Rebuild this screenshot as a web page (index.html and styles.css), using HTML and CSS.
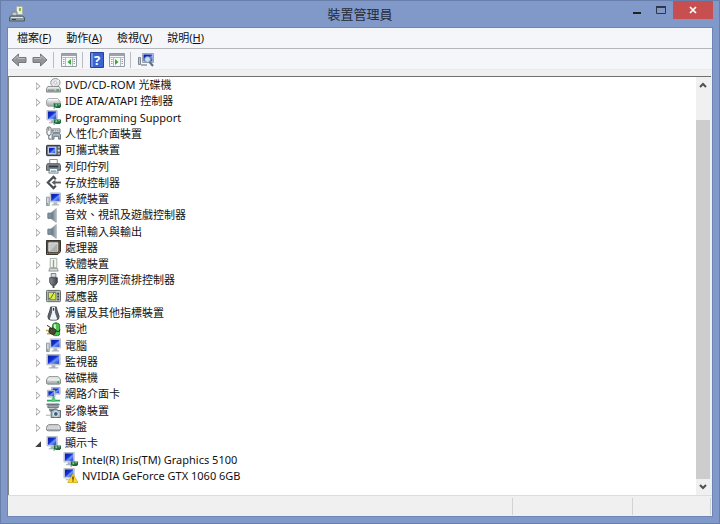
FILE: index.html
```
<!DOCTYPE html>
<html lang="zh-Hant">
<head>
<meta charset="utf-8">
<meta name="viewport" content="width=device-width, initial-scale=1">
<title>裝置管理員</title>
<link rel="stylesheet" href="styles.css">
</head>
<body>

<svg class="sprites" aria-hidden="true">
  <defs>
    <linearGradient id="screen" x1="0" y1="0" x2="1" y2="1"><stop offset="0" stop-color="#0a18a0"/><stop offset=".45" stop-color="#1230d8"/><stop offset=".6" stop-color="#6f95f5"/><stop offset="1" stop-color="#1b36c8"/></linearGradient>
    <linearGradient id="metal" x1="0" y1="0" x2="0" y2="1"><stop offset="0" stop-color="#f8f8f8"/><stop offset="1" stop-color="#a0a4a6"/></linearGradient>
    <linearGradient id="dark" x1="0" y1="0" x2="1" y2="0"><stop offset="0" stop-color="#8a9096"/><stop offset="1" stop-color="#3c4248"/></linearGradient>
    <linearGradient id="cone" x1="0" y1="0" x2="1" y2="0"><stop offset="0" stop-color="#5c6c78"/><stop offset="1" stop-color="#b4c0c9"/></linearGradient>
  </defs>
  <symbol id="card" viewBox="0 0 8 7"><path d="M0 0h1v1h7v4H7v1H2V5H1v2H0z" fill="#1c6b3c"/><path d="M2 2h2v2H2zM5 2h2v1H5z" fill="#8fc9a0"/></symbol>
  <symbol id="monitor" viewBox="0 0 16 16"><path d="M1 .5h14v11H1z" fill="#dfe4ea" stroke="#aab2bc"/><path d="M2 1.500h12v9H2z" fill="url(#screen)"/><path d="M6 12h4v2h3v1.500H3V14h3z" fill="#a9afb4"/></symbol>
  <symbol id="display" viewBox="0 0 16 16"><path d="M1 .5h11v10H1z" fill="#dfe4ea" stroke="#b4bcc6"/><path d="M2 1.500h9v8H2z" fill="url(#screen)"/><path d="M5 11h3v2h1v1H3v-1h2z" fill="#a9afb4"/><use href="#card" x="8" y="9" width="8" height="7"/></symbol>
  <symbol id="display-warn" viewBox="0 0 16 16"><path d="M1 .5h11v10H1z" fill="#dfe4ea" stroke="#b4bcc6"/><path d="M2 1.500h9v8H2z" fill="url(#screen)"/><path d="M3 12h3v1H3z" fill="#a9afb4"/><path d="M10.500 6 16 15.500H5z" fill="#ffda28" stroke="#c79a00" stroke-width=".7"/><path d="M10 9h1.300v3.500H10zM10 13.300h1.300v1.200H10z" fill="#2c2400"/></symbol>
  <symbol id="disc" viewBox="0 0 16 16"><ellipse cx="10" cy="5" rx="5" ry="4.500" fill="#e3e6e8" stroke="#8c9194"/><path d="M10 5l4-3M10 5l-3 4" stroke="#fff"/><circle cx="10" cy="5" r="1.500" fill="#fff" stroke="#999" stroke-width=".6"/><path d="M2 9h12l1.500 2.500V15H.5v-3.500z" fill="url(#metal)" stroke="#84888a"/><path d="M2 13h7" stroke="#707476"/><path d="M11 12h3v2h-3z" fill="#49a860"/></symbol>
  <symbol id="ide" viewBox="0 0 16 16"><path d="M2.500 5h10L15 8v3.500L13 13H2L.5 11.500V7z" fill="url(#metal)" stroke="#969a9c"/><path d="M2 6h11" stroke="#fff"/><use href="#card" x="8" y="9" width="8" height="7"/></symbol>
  <symbol id="drive" viewBox="0 0 16 16"><path d="M3 6h10l2.500 3v4l-1 1H1.500l-1-1V9z" fill="url(#metal)" stroke="#85898b"/><path d="M2 9.500h12" stroke="#fff"/><path d="M12 11h2v2h-2z" fill="#38a83c"/></symbol>
  <symbol id="hid" viewBox="0 0 16 16"><rect x="1" y="1" width="4.500" height="9" rx="2.200" fill="#f4f5f5" stroke="#596069"/><path d="M3 2v3M3 10v4h3" fill="none" stroke="#596069"/><path d="M7 3h8v4H7z" fill="#cfd2d4" stroke="#888f94"/><path d="M7.500 5h8" stroke="#70777d" stroke-dasharray="1 1"/><path d="M6.500 14V9l2-1.500h5L15.500 9v5h-2v-3h-5v3z" fill="#a7bac6" stroke="#606d78"/></symbol>
  <symbol id="portable" viewBox="0 0 16 16"><rect x=".5" y="2.500" width="15" height="11" rx="1" fill="#606873" stroke="#252c38"/><path d="M2.500 4.500h8v7h-8z" fill="url(#screen)" stroke="#eef"/><path d="M13 4.500h1.500M13 11.500h1.500" stroke="#fff"/><circle cx="13.600" cy="8" r="1.200" fill="#dce1e8"/></symbol>
  <symbol id="printer" viewBox="0 0 16 16"><path d="M4 .5h8V6H4z" fill="#fff" stroke="#83888b"/><path d="M1.500 5h13l1 2v5h-15V7z" fill="#838b90" stroke="#4f565a"/><path d="M3 7h10v2H3z" fill="#343a3f"/><path d="M4 10h8l1 5H3z" fill="#f5f9fc" stroke="#6f777c"/><path d="M5 12h6v2H5z" fill="#7fb2d9"/></symbol>
  <symbol id="storage" viewBox="0 0 16 16"><path d="M10.500 4.500 8 2 2 8l6 6 2.500-2.500" fill="none" stroke="#4b4f52" stroke-width="2.400"/><path d="M16 8H8" stroke="#585c5f" stroke-width="2"/><path d="M6 8l4-3v6z" fill="#585c5f"/></symbol>
  <symbol id="computer" viewBox="0 0 16 16"><path d="M.5 5.500h3v9h-3z" fill="#d3d8dc" stroke="#8e969e"/><path d="M1 12h1.500v1.500H1z" fill="#38b24b"/><path d="M4.500 1h11v9.500h-11z" fill="#dfe4ea" stroke="#b0b9c4"/><path d="M5.500 2h9v7.500h-9z" fill="url(#screen)"/><path d="M8 11h4v2h2v1.500H6V13h2z" fill="#b0b6ba"/></symbol>
  <symbol id="speaker" viewBox="0 0 16 16"><path d="M2 5.500h3.500v5.500H2z" fill="#8494a0" stroke="#647480"/><path d="M5.500 5 11 .5v15L5.500 11.500z" fill="url(#cone)" stroke="#8593a0" stroke-width=".6"/></symbol>
  <symbol id="cpu" viewBox="0 0 16 16"><path d="M.5.500h15v12l-3 3H.5z" fill="#5a4e38" stroke="#2c2a26"/><path d="M1 14.500h12L15 12" fill="none" stroke="#c09a50" stroke-dasharray="1 1"/><path d="M3 3h9.500v9H3z" fill="#c4c8ca" stroke="#e0e2e4"/><path d="M4 12 12 4v8z" fill="#a8adb0"/></symbol>
  <symbol id="software" viewBox="0 0 16 16"><path d="M4.500 1.500h7v10h-7z" fill="#f4f7f4" stroke="#a4aba6"/><path d="M8 3v9" stroke="#7cb47c" stroke-width="1.500"/><path d="M4 12h8l1 3H3z" fill="#d4d8d6" stroke="#8f9692"/></symbol>
  <symbol id="usb" viewBox="0 0 16 16"><path d="M5.500.5h5v4h-5z" fill="#d7dadc" stroke="#777c80"/><path d="M4 5h8v5l-2 3H6L4 10z" fill="url(#dark)" stroke="#42484d"/><path d="M8 13v3" stroke="#444b50" stroke-width="2"/></symbol>
  <symbol id="sensor" viewBox="0 0 16 16"><rect x=".5" y="1.500" width="15" height="12" rx="1" fill="#b8bfbd" stroke="#5d6562"/><path d="M2.500 3.500h8v8h-8z" fill="#e6ea3c" stroke="#6b716d"/><path d="M3 10h2l4-7" fill="none" stroke="#2f7741"/><path d="M12 4h2v2h-2zM12 7h2v2h-2zM12 10h2v2h-2z" fill="#3d4642"/></symbol>
  <symbol id="mouse" viewBox="0 0 16 16"><path d="M5 1h6l1 4 2 6q0 4-3 4H5q-3 0-3-4l2-6z" fill="#59636e" stroke="#424a53"/><path d="M6.500 1h3v6l2.500 7q-4 1.500-8 0L6.500 7z" fill="#f2f5f7"/><path d="M8 2v3" stroke="#2f3c49" stroke-width="1.500"/></symbol>
  <symbol id="battery" viewBox="0 0 16 16"><path d="M9 0h3v2H9z" fill="#9aa59d"/><rect x="7" y="1.500" width="7.500" height="13" rx="2" fill="#4cc44c" stroke="#207b28"/><path d="M9.500 2.500v5" stroke="#d5f7cc" stroke-width="2"/><path d="M0 9h4M1 12.500h4" stroke="#c8a548" stroke-width="1.500"/><path d="M4 6.500h4l3 2.500-2 4H6l-3-2z" fill="#4d4937" stroke="#24251e"/><path d="M11 10q4 1 4-2M1 3.500l4 2.500" fill="none" stroke="#24251e"/></symbol>
  <symbol id="network" viewBox="0 0 16 16"><path d="M6 .5h9v7H6z" fill="#dfe4ea" stroke="#9aaac0"/><path d="M7 1.500h7v5H7z" fill="url(#screen)"/><path d="M1.500 3.500h8v7h-8z" fill="#dfe4ea" stroke="#9aaac0"/><path d="M2.500 4.500h6v5h-6z" fill="url(#screen)"/><path d="M8 10v4M1 14.500h14" stroke="#25ad5b" stroke-width="2"/><path d="M6 12h4v4H6z" fill="#54ce7d"/></symbol>
  <symbol id="imaging" viewBox="0 0 16 16"><path d="M1 .5h13l1 2H0z" fill="#69777e"/><path d="M2 3h11v2H2z" fill="#b7c1c5" stroke="#5f696e"/><path d="M3 6h8L8 9H4z" fill="#707e86"/><path d="M5.500 8h2l1-1.500h3l1 1.500h3v7.500h-10z" fill="#aeb9c0" stroke="#57646d"/><circle cx="10.500" cy="11.700" r="2.600" fill="#326488" stroke="#f4f8fb"/><path d="M0 13h5" stroke="#a0a8ac"/></symbol>
  <symbol id="keyboard" viewBox="0 0 16 16"><path d="M3 5h10q2.500 1 2.500 4v1.500q-.5 1-2 1h-11q-1.500 0-2-1V9Q.5 6 3 5z" fill="#e4e7e9" stroke="#6e757b"/><path d="M3 6.500h10M2 8.500h12" stroke="#989fa5" stroke-dasharray="1 1"/><path d="M1 10.500h14" stroke="#858c92"/></symbol>
  <symbol id="app" viewBox="0 0 16 16"><path d="M7.500.5h6v8h-6z" fill="#e9eee8" stroke="#a7b0aa"/><path d="M10 2h2v3h-2z" fill="#84b83d"/><path d="M3 6h5v4H3z" fill="#c2cbd1" stroke="#77838c"/><path d="M1.500 10h12l2 1.500v3.500H.5v-3.500z" fill="#8a98a0" stroke="#4e5c66"/><path d="M2 11.500h12" stroke="#dbe3e7"/><path d="M3 13.500h4" stroke="#38454e"/></symbol>
  <symbol id="arrow" viewBox="0 0 16 14"><path d="M1 7 7.500 1v3.500H15v5H7.500V13z" fill="#929495" stroke="#76787a"/><path d="M3 6.500 7 3v2.500h7" fill="none" stroke="#b9bbbc"/></symbol>
  <symbol id="pane" viewBox="0 0 16 14"><path d="M.5.500h15v13H.5z" fill="#f7f9fa" stroke="#929aa2"/><path d="M1 2h14" stroke="#9aa5b0" stroke-width="2"/><path d="M1 4.500h14M4.500 5v8M11.500 5v8" stroke="#b4bcc3"/><path d="M2 6.500h1.500M2 8.500h1.500M2 10.500h1.500M12.500 6.500H14M12.500 8.500H14M12.500 10.500H14" stroke="#7aa6cb"/></symbol>
  <symbol id="help" viewBox="0 0 14 16"><path d="M.5.500h13v15H.5z" fill="#3965d2" stroke="#274398"/><path d="M1 1h2v14H1z" fill="#7295e4"/></symbol>
  <symbol id="scan" viewBox="0 0 16 14"><path d="M.5 4.500h2v7h-2z" fill="#bfc7ce" stroke="#7b8791"/><path d="M4.500.5h11v9h-11z" fill="#dce2ea" stroke="#9ca7b3"/><path d="M5.500 1.500h9v7h-9z" fill="url(#screen)"/><path d="M3 12h6" stroke="#a5adb5" stroke-width="2"/><circle cx="9.500" cy="6.500" r="3" fill="#c7def5" stroke="#7388a1"/><path d="m11.500 9 3.500 4" stroke="#62717e" stroke-width="2"/></symbol>
</svg>

<div class="window">
  <header class="titlebar">
    <svg class="app-icon"><use href="#app"/></svg>
    <h1>裝置管理員</h1>
    <div class="controls">
      <button type="button" aria-label="最小化"><svg viewBox="0 0 14 12"><path d="M3 9h8" stroke="#222" stroke-width="2"/></svg></button>
      <button type="button" aria-label="最大化"><svg viewBox="0 0 14 12"><path d="M2.500 3.500h9v6h-9z" fill="none" stroke="#303747"/><path d="M2 3h10" stroke="#303747" stroke-width="2"/></svg></button>
      <button type="button" class="close" aria-label="關閉"><svg viewBox="0 0 14 12"><path d="m4 3 6 6m0-6L4 9" stroke="#fff" stroke-width="1.700"/></svg></button>
    </div>
  </header>

  <main class="client">
    <nav class="menu">
      <button type="button">檔案(<u>F</u>)</button>
      <button type="button">動作(<u>A</u>)</button>
      <button type="button">檢視(<u>V</u>)</button>
      <button type="button">說明(<u>H</u>)</button>
    </nav>

    <div class="toolbar">
      <button type="button" aria-label="上一頁"><svg><use href="#arrow"/></svg></button>
      <button type="button" aria-label="下一頁"><svg class="flip"><use href="#arrow"/></svg></button>
      <span class="sep"></span>
      <button type="button" aria-label="顯示主控台樹狀目錄"><svg viewBox="0 0 16 14"><use href="#pane"/><path d="M10 6v6L6.500 9z" fill="#3da935"/></svg></button>
      <span class="sep"></span>
      <button type="button" class="help" aria-label="說明"><svg><use href="#help"/></svg><b>?</b></button>
      <button type="button" aria-label="顯示動作窗格"><svg viewBox="0 0 16 14"><use href="#pane"/><path d="M6 6v6l3.500-3z" fill="#3da935"/></svg></button>
      <span class="sep"></span>
      <button type="button" aria-label="掃描硬體變更"><svg><use href="#scan"/></svg></button>
    </div>

    <div class="view">
      <ul class="tree">
        <li><button type="button" class="twisty" aria-label="展開"></button><svg><use href="#disc"/></svg>DVD/CD-ROM 光碟機</li>
        <li><button type="button" class="twisty" aria-label="展開"></button><svg><use href="#ide"/></svg>IDE ATA/ATAPI 控制器</li>
        <li><button type="button" class="twisty" aria-label="展開"></button><svg><use href="#display"/></svg>Programming Support</li>
        <li><button type="button" class="twisty" aria-label="展開"></button><svg><use href="#hid"/></svg>人性化介面裝置</li>
        <li><button type="button" class="twisty" aria-label="展開"></button><svg><use href="#portable"/></svg>可攜式裝置</li>
        <li><button type="button" class="twisty" aria-label="展開"></button><svg><use href="#printer"/></svg>列印佇列</li>
        <li><button type="button" class="twisty" aria-label="展開"></button><svg><use href="#storage"/></svg>存放控制器</li>
        <li><button type="button" class="twisty" aria-label="展開"></button><svg><use href="#computer"/></svg>系統裝置</li>
        <li><button type="button" class="twisty" aria-label="展開"></button><svg><use href="#speaker"/></svg>音效、視訊及遊戲控制器</li>
        <li><button type="button" class="twisty" aria-label="展開"></button><svg><use href="#speaker"/></svg>音訊輸入與輸出</li>
        <li><button type="button" class="twisty" aria-label="展開"></button><svg><use href="#cpu"/></svg>處理器</li>
        <li><button type="button" class="twisty" aria-label="展開"></button><svg><use href="#software"/></svg>軟體裝置</li>
        <li><button type="button" class="twisty" aria-label="展開"></button><svg><use href="#usb"/></svg>通用序列匯流排控制器</li>
        <li><button type="button" class="twisty" aria-label="展開"></button><svg><use href="#sensor"/></svg>感應器</li>
        <li><button type="button" class="twisty" aria-label="展開"></button><svg><use href="#mouse"/></svg>滑鼠及其他指標裝置</li>
        <li><button type="button" class="twisty" aria-label="展開"></button><svg><use href="#battery"/></svg>電池</li>
        <li><button type="button" class="twisty" aria-label="展開"></button><svg><use href="#computer"/></svg>電腦</li>
        <li><button type="button" class="twisty" aria-label="展開"></button><svg><use href="#monitor"/></svg>監視器</li>
        <li><button type="button" class="twisty" aria-label="展開"></button><svg><use href="#drive"/></svg>磁碟機</li>
        <li><button type="button" class="twisty" aria-label="展開"></button><svg><use href="#network"/></svg>網路介面卡</li>
        <li><button type="button" class="twisty" aria-label="展開"></button><svg><use href="#imaging"/></svg>影像裝置</li>
        <li><button type="button" class="twisty" aria-label="展開"></button><svg><use href="#keyboard"/></svg>鍵盤</li>
        <li><button type="button" class="twisty open" aria-label="摺疊"></button><svg><use href="#display"/></svg>顯示卡</li>
        <li class="child"><svg><use href="#display"/></svg>Intel(R) Iris(TM) Graphics 5100</li>
        <li class="child"><svg><use href="#display-warn"/></svg>NVIDIA GeForce GTX 1060 6GB</li>
      </ul>
      <div class="scrollbar">
        <button type="button" aria-label="向上捲動"><svg viewBox="0 0 8 6"><path d="m1 5 3-3 3 3" fill="none" stroke="#505050" stroke-width="2"/></svg></button>
        <div class="track"><div class="thumb"></div></div>
        <button type="button" aria-label="向下捲動"><svg viewBox="0 0 8 6"><path d="m1 1 3 3 3-3" fill="none" stroke="#505050" stroke-width="2"/></svg></button>
      </div>
    </div>

    <footer class="status"><span></span><span></span><span></span></footer>
  </main>
</div>

</body>
</html>
```
FILE: styles.css
```
* {
  box-sizing: border-box;
}

body {
  margin: 0;
  font: 11px/16px "Noto Sans", "Noto Sans CJK TC", sans-serif;
  color: #111;
}

button {
  display: flex;
  align-items: center;
  justify-content: center;
  margin: 0;
  padding: 0;
  border: 0;
  background: none;
  font: inherit;
  color: inherit;
}

svg {
  display: block;
  flex: none;
}

.sprites {
  position: absolute;
  width: 0;
  height: 0;
}

.window {
  display: flex;
  flex-direction: column;
  min-height: 100vh;
  padding: 0 6px 6px;
  border: 1px solid #687fac;
  background: #8099c9;
}

/* title bar */
.titlebar {
  display: grid;
  grid-template-columns: 1fr auto 1fr;
  height: 26px;
}

.app-icon {
  width: 16px;
  height: 16px;
  margin: 5px 0 0 2px;
}

h1 {
  margin: 0;
  font-size: 13px;
  line-height: 26px;
  font-weight: normal;
  color: #252b38;
}

.controls {
  display: flex;
  justify-content: flex-end;
}

.controls button {
  width: 24px;
  height: 18px;
}

.controls svg {
  width: 14px;
  height: 12px;
}

.controls .close {
  width: 40px;
  background: #c84f50;
}

.client {
  flex: 1;
  display: flex;
  flex-direction: column;
  border: 1px solid #6c86b8;
  background: #f0f0f0;
}

/* menu and tools */
.menu {
  display: flex;
  gap: 15px;
  height: 21px;
  padding: 0 9px;
  border-bottom: 1px solid #b4b8bb;
  background: #f5f6f9;
}

.toolbar {
  display: flex;
  align-items: center;
  gap: 5px;
  height: 21px;
  padding: 2px 3px 0;
  border-bottom: 1px solid #e9eaeb;
  background: #f5f6f9;
}

.toolbar svg {
  width: 16px;
  height: 14px;
}

.toolbar .flip {
  transform: scaleX(-1);
}

.sep {
  width: 1px;
  height: 16px;
  margin-right: 2px;
  background: #b9bbbd;
}

.help {
  position: relative;
}

.toolbar .help svg {
  width: 14px;
  height: 16px;
}

.help b {
  position: absolute;
  inset: 0;
  color: #fff;
  font-size: 13px;
  line-height: 16px;
}

/* devices */
.view {
  flex: 1;
  display: flex;
  margin: 6px 1px 0 0;
  border-top: 1px solid #707070;
  border-left: 1px solid #858585;
  background: #fff;
}

.tree {
  flex: 1;
  display: grid;
  grid-auto-rows: 1fr;
  margin: 0;
  padding: 0 0 11px 25px;
  list-style: none;
}

.tree li {
  display: flex;
  align-items: center;
  white-space: nowrap;
}

.tree svg {
  width: 15px;
  height: 15px;
  margin-right: 4px;
}

.tree .child {
  padding-left: 29px;
}

.twisty {
  width: 8px;
  height: 10px;
  margin: 2px 4px 0 0;
}

.twisty::before {
  content: "";
  width: 5px;
  height: 9px;
  background: #999;
  clip-path: polygon(0 0, 100% 50%, 0 100%, 0 0, 1px 2px, 1px 7px, 4px 50%, 1px 2px);
}

.twisty.open::before {
  width: 6px;
  height: 6px;
  background: #404040;
  clip-path: polygon(100% 0, 100% 100%, 0 100%);
}

.scrollbar {
  display: flex;
  flex-direction: column;
  width: 15px;
  padding-right: 1px;
  background: #f0f0f0;
}

.scrollbar button {
  height: 16px;
}

.scrollbar svg {
  width: 8px;
  height: 6px;
}

.track {
  flex: 1;
  display: flex;
  flex-direction: column;
  justify-content: flex-end;
}

.thumb {
  height: 93%;
  background: #cdcdcd;
}

/* status bar */
.status {
  display: flex;
  height: 21px;
  padding: 2px 1px 1px;
  border-top: 1px solid #dcdcdc;
}

.status span {
  border-right: 1px solid #d3d3d3;
}

.status span:nth-child(1) {
  flex: 505;
}

.status span:nth-child(2) {
  flex: 120;
}

.status span:nth-child(3) {
  flex: 77;
}
```
